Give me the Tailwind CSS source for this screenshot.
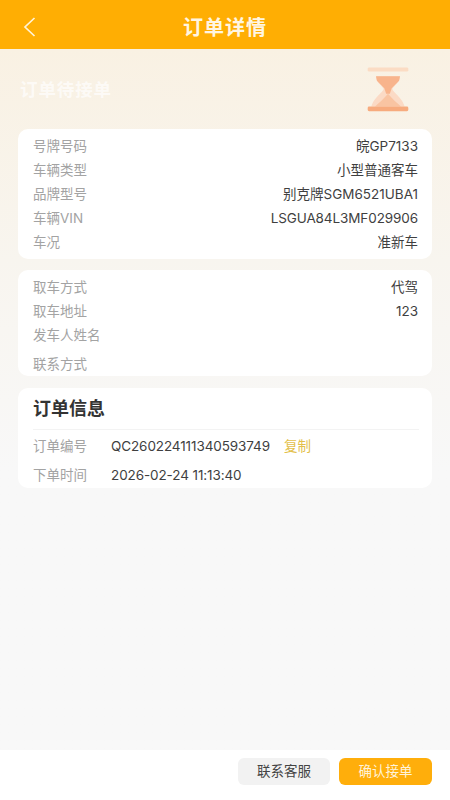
<!DOCTYPE html>
<html lang="zh">
<head>
<meta charset="utf-8">
<script src="https://cdn.jsdelivr.net/npm/@tailwindcss/browser@4"></script>
</head>
<body class="m-0">
<div class="relative flex h-[800px] w-[450px] flex-col overflow-hidden bg-[#f8f8f8] font-['Inter','Noto_Sans_CJK_SC',sans-serif] text-[13.5px] text-[#3f3f3f]">
  <header class="relative flex h-[49px] shrink-0 items-center justify-center overflow-hidden bg-[#ffae03] pt-[6px]">
    <svg class="absolute left-[23px] top-[17px]" width="14" height="20" viewBox="0 0 14 20" fill="none" stroke="#fff3d9" stroke-width="1.7"><path d="M11.5 1 2 10l9.5 9"/></svg>
    <h1 class="relative text-[20px] font-bold tracking-[1px] text-[#fff6e3]">订单详情</h1>
  </header>
  <main class="flex flex-1 flex-col bg-gradient-to-b from-[#f9f1e3] from-0% via-[#f8f5ef] via-30% to-[#f8f8f8] to-60%">
    <div class="flex h-[80px] shrink-0 items-start justify-between pl-[20px] pr-[38px]">
      <div class="mt-[30px] text-[17.5px] font-bold leading-[22px] tracking-[0.9px] text-white/70">订单待接单</div>
      <svg class="mt-[16px]" width="48" height="50" viewBox="10 0 52 52">
        <rect x="14" y="1.5" width="44" height="4.5" rx="1.5" fill="#fbdcc4"/>
        <path d="M23 11h26c0 6-5 9-8 13-2 3 11 10 13 20H18c2-10 15-17 13-20-3-4-8-7-8-13z" fill="#fbdac5"/>
        <path d="M23 11h26l-1 5-8 8-2 6-4 0-2-6-8-8z" fill="#f8b48c"/>
        <path d="M22 44c4-4 9-8 14-14 5 6 10 10 14 14z" fill="#f9c4a2"/>
        <rect x="14" y="44" width="44" height="5" rx="1.5" fill="#f7ab7e"/>
      </svg>
    </div>
    <div class="flex flex-col gap-[11px] px-[18px]">
      <section class="rounded-[10px] bg-white pb-[5px] pl-[15px] pr-[14px] pt-[5px]">
        <div class="flex h-[24px] items-center justify-between"><span class="text-[#a3a3a3]">号牌号码</span><span>皖GP7133</span></div>
        <div class="flex h-[24px] items-center justify-between"><span class="text-[#a3a3a3]">车辆类型</span><span>小型普通客车</span></div>
        <div class="flex h-[24px] items-center justify-between"><span class="text-[#a3a3a3]">品牌型号</span><span>别克牌SGM6521UBA1</span></div>
        <div class="flex h-[24px] items-center justify-between"><span class="text-[#a3a3a3]">车辆VIN</span><span class="tracking-[-0.1px]">LSGUA84L3MF029906</span></div>
        <div class="flex h-[24px] items-center justify-between"><span class="text-[#a3a3a3]">车况</span><span>准新车</span></div>
      </section>
      <section class="h-[106px] rounded-[10px] bg-white pl-[15px] pr-[14px] pt-[5px]">
        <div class="flex h-[24px] items-center justify-between"><span class="text-[#a3a3a3]">取车方式</span><span>代驾</span></div>
        <div class="flex h-[24px] items-center justify-between"><span class="text-[#a3a3a3]">取车地址</span><span>123</span></div>
        <div class="flex h-[24px] items-center justify-between"><span class="text-[#a3a3a3]">发车人姓名</span></div>
        <div class="mt-[5px] flex h-[24px] items-center justify-between"><span class="text-[#a3a3a3]">联系方式</span></div>
      </section>
      <section class="mt-[1px] h-[100px] rounded-[10px] bg-white pl-[15px] pr-[13px]">
        <div class="flex h-[41.5px] items-center border-b border-[#f3f3f3] text-[18px] font-bold text-[#333333]">订单信息</div>
        <div class="mt-[5px] flex h-[24px] items-center"><span class="w-[78px] text-[#a3a3a3]">订单编号</span><span class="tracking-[-0.1px]">QC260224111340593749</span><span class="ml-[14px] text-[#e3c04a]">复制</span></div>
        <div class="mt-[5px] flex h-[24px] items-center"><span class="w-[78px] text-[#a3a3a3]">下单时间</span><span class="tracking-[-0.1px]">2026-02-24 11:13:40</span></div>
      </section>
    </div>
  </main>
  <footer class="flex h-[50px] shrink-0 items-start justify-end gap-[9px] bg-white pr-[18px] pt-[8px]">
    <button class="flex h-[27px] w-[92px] items-center justify-center rounded-[6px] bg-[#f2f2f2] text-[#444444]">联系客服</button>
    <button class="flex h-[27px] w-[93px] items-center justify-center rounded-[6px] bg-[#ffae0b] text-[#fff3da]">确认接单</button>
  </footer>
</div>
</body>
</html>
